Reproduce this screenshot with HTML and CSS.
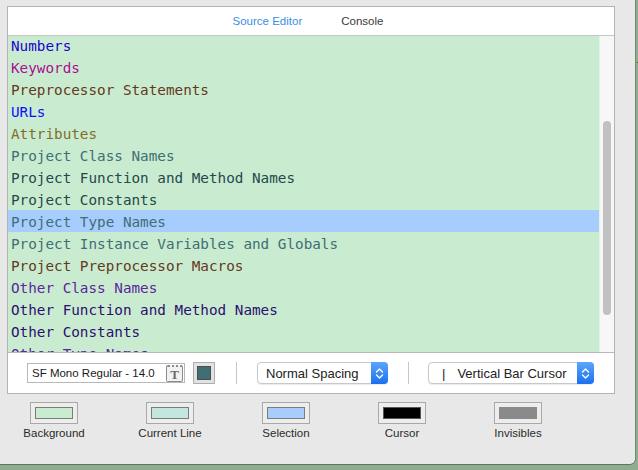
FILE: index.html
```html
<!DOCTYPE html>
<html>
<head>
<meta charset="utf-8">
<link rel="stylesheet" href="styles.css">
</head>
<body>
<div class="screen">
  <div class="window">
    <div class="panel">
      <div class="tabs">
        <span class="tab active">Source Editor</span>
        <span class="tab">Console</span>
      </div>
      <div class="editor">
        <div class="list">
          <div class="row c-num">Numbers</div>
          <div class="row c-kw">Keywords</div>
          <div class="row c-pre">Preprocessor Statements</div>
          <div class="row c-url">URLs</div>
          <div class="row c-attr">Attributes</div>
          <div class="row c-pcls">Project Class Names</div>
          <div class="row c-pfn">Project Function and Method Names</div>
          <div class="row c-pfn">Project Constants</div>
          <div class="row c-pcls selected">Project Type Names</div>
          <div class="row c-pcls">Project Instance Variables and Globals</div>
          <div class="row c-pre">Project Preprocessor Macros</div>
          <div class="row c-ocls">Other Class Names</div>
          <div class="row c-ofn">Other Function and Method Names</div>
          <div class="row c-ofn">Other Constants</div>
          <div class="row c-ocls">Other Type Names</div>
        </div>
        <div class="scroll"><div class="thumb"></div></div>
      </div>
      <div class="toolbar">
        <div class="fontfield">
          <span class="fontname">SF Mono Regular - 14.0</span>
          <span class="ticon">T</span>
        </div>
        <div class="colorwell"><span class="cw-swatch"></span></div>
        <div class="sep sep1"></div>
        <div class="popup popup-spacing">
          <span class="popup-label">Normal Spacing</span>
          <span class="popup-arrow">
            <svg width="9" height="13" viewBox="0 0 9 13"><path d="M1.5 5 L4.5 2 L7.5 5 M1.5 8 L4.5 11 L7.5 8" fill="none" stroke="#fff" stroke-width="1.4" stroke-linecap="round" stroke-linejoin="round"/></svg>
          </span>
        </div>
        <div class="sep sep2"></div>
        <div class="popup popup-cursor">
          <span class="popup-label"><span class="bar">|</span>Vertical Bar Cursor</span>
          <span class="popup-arrow">
            <svg width="9" height="13" viewBox="0 0 9 13"><path d="M1.5 5 L4.5 2 L7.5 5 M1.5 8 L4.5 11 L7.5 8" fill="none" stroke="#fff" stroke-width="1.4" stroke-linecap="round" stroke-linejoin="round"/></svg>
          </span>
        </div>
      </div>
    </div>
    <div class="wells">
      <div class="well-item">
        <div class="well"><span class="swatch sw-bg"></span></div>
        <div class="well-label">Background</div>
      </div>
      <div class="well-item">
        <div class="well"><span class="swatch sw-line"></span></div>
        <div class="well-label">Current Line</div>
      </div>
      <div class="well-item">
        <div class="well"><span class="swatch sw-sel"></span></div>
        <div class="well-label">Selection</div>
      </div>
      <div class="well-item">
        <div class="well"><span class="swatch sw-cur"></span></div>
        <div class="well-label">Cursor</div>
      </div>
      <div class="well-item">
        <div class="well"><span class="swatch sw-inv"></span></div>
        <div class="well-label">Invisibles</div>
      </div>
    </div>
  </div>
  <div class="desk">
    <div class="desk-line">t</div>
    <div class="desk-line">r</div>
  </div>
</div>
</body>
</html>
```

FILE: styles.css
```css
* { box-sizing: border-box; }
html, body { margin: 0; padding: 0; }
body {
  width: 638px;
  height: 470px;
  overflow: hidden;
  background: #8fab90;
  font-family: "Liberation Sans", Arial, sans-serif;
}
.screen {
  display: flex;
  width: 638px;
  height: 470px;
}
.window {
  width: 635px;
  height: 464px;
  flex: none;
  background: #e8e8e8;
  border-bottom-right-radius: 5px;
  box-shadow: 0 1px 0 #5f775f, 1px 0 0 #6f8b70;
  padding-top: 6px;
}
.panel {
  width: 608px;
  height: 388px;
  margin-left: 7px;
  border: 1px solid #b3b3b3;
  background: #fff;
  display: flex;
  flex-direction: column;
}
.tabs {
  height: 29px;
  border-bottom: 1px solid #c6c6c6;
  display: flex;
  justify-content: center;
  align-items: center;
  gap: 39px;
  padding-right: 6px;
  padding-bottom: 1px;
  font-size: 11.5px;
}
.tab { color: #3a3a3a; }
.tab.active { color: #3b8ee4; }
.editor {
  height: 317px;
  border-bottom: 1px solid #b9b9b9;
  display: flex;
  overflow: hidden;
}
.list {
  width: 592px;
  background: #c9ecd1;
  overflow: hidden;
  border-right: 1px solid #e4f3e7;
}
.row {
  height: 22px;
  line-height: 20px;
  padding: 2px 0 0 3px;
  font-family: "DejaVu Sans Mono", "Liberation Mono", monospace;
  font-size: 14.3px;
  white-space: nowrap;
}
.row:first-child { margin-top: -2px; }
.row.selected { background: #a6cdfd; }
.c-num { color: #1c00cf; }
.c-kw { color: #aa0d91; }
.c-pre { color: #643820; }
.c-url { color: #0e0eff; }
.c-attr { color: #836c28; }
.c-pcls { color: #3f6e74; }
.c-pfn { color: #26474b; }
.c-ocls { color: #5c2699; }
.c-ofn { color: #2e0d6e; }
.scroll {
  width: 14px;
  background: #f7f7f7;
  padding: 85px 0 0 3px;
}
.thumb {
  width: 8px;
  height: 194px;
  border-radius: 4px;
  background: #c1c1c1;
}
.toolbar {
  height: 40px;
  display: flex;
  align-items: center;
  padding-left: 19px;
}
.fontfield {
  width: 158px;
  height: 20px;
  border: 1px solid #b8b8b8;
  background: #fff;
  display: flex;
  align-items: center;
  justify-content: space-between;
  padding: 0 1px 0 4px;
  font-size: 11.5px;
  color: #1a1a1a;
}
.ticon {
  width: 17px;
  height: 17px;
  border: 1px solid #8c8c8c;
  border-radius: 2px;
  background: #f2f2f2;
  color: #6a6a6a;
  font-family: "Liberation Serif", "Times New Roman", serif;
  font-weight: bold;
  font-size: 13px;
  line-height: 16px;
  text-align: center;
  border-top-width: 2px;
  border-top-style: dotted;
}
.colorwell {
  width: 22px;
  height: 22px;
  margin-left: 8px;
  border: 1px solid #adadad;
  background: #e2e2e2;
  padding: 3px;
}
.cw-swatch {
  display: block;
  width: 100%;
  height: 100%;
  background: #3f6e74;
  border: 1px solid #4d4d4d;
}
.sep {
  width: 1px;
  height: 22px;
  background: #c6c6c6;
}
.sep1 { margin-left: 21px; }
.sep2 { margin-left: 20px; }
.popup {
  height: 22px;
  border: 1px solid #c8c8c8;
  border-radius: 4px;
  background: #fff;
  display: flex;
  align-items: stretch;
  box-shadow: 0 1px 1px rgba(0,0,0,0.08);
  font-size: 13px;
  color: #222;
}
.popup-spacing { width: 131px; margin-left: 20px; }
.popup-cursor { width: 166px; margin-left: 19px; }
.popup-label {
  flex: 1;
  display: flex;
  align-items: center;
  padding-left: 8px;
  white-space: nowrap;
}
.popup-cursor .popup-label { padding-left: 13px; }
.bar { margin-right: 12px; }
.popup-arrow {
  width: 17px;
  margin: -1px -1px -1px 0;
  border-radius: 0 4px 4px 0;
  background: linear-gradient(#5ba6fb, #1c70f0);
  display: flex;
  align-items: center;
  justify-content: center;
}
.wells {
  display: flex;
  gap: 20px;
  padding-left: 6px;
  margin-top: 8px;
}
.well-item {
  width: 96px;
  display: flex;
  flex-direction: column;
  align-items: center;
}
.well {
  width: 48px;
  height: 22px;
  border: 1px solid #a9a9a9;
  background: #ededed;
  padding: 4px;
}
.swatch {
  display: block;
  width: 100%;
  height: 100%;
  border: 1px solid #7b7b7b;
}
.sw-bg { background: #c9ecd1; }
.sw-line { background: #c3e6de; }
.sw-sel { background: #a6cdfd; }
.sw-cur { background: #000; border-color: #555; }
.sw-inv { background: #8a8a8a; border-color: #8a8a8a; }
.well-label {
  margin-top: 2px;
  font-size: 11.5px;
  line-height: 14px;
  color: #2a2a2a;
}
.desk {
  width: 3px;
  overflow: hidden;
  padding-top: 55px;
  padding-left: 1px;
}
.desk-line {
  font-family: "DejaVu Sans Mono", monospace;
  font-size: 14px;
  line-height: 20px;
  color: #4c6a12;
}
```
